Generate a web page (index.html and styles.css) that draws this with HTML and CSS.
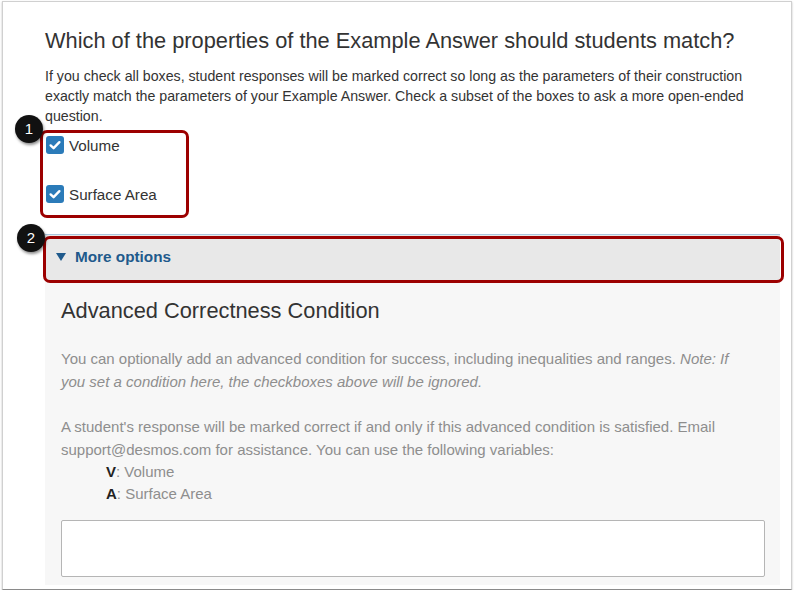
FILE: index.html
```html
<!DOCTYPE html>
<html>
<head>
<meta charset="utf-8">
<link rel="stylesheet" href="styles.css">
</head>
<body>
<div class="frame">
  <h1 class="q-title">Which of the properties of the Example Answer should students match?</h1>
  <p class="q-desc">If you check all boxes, student responses will be marked correct so long as the parameters of their construction exactly match the parameters of your Example Answer. Check a subset of the boxes to ask a more open-ended question.</p>
  <div class="checks">
    <label class="check-row"><span class="checkbox"><svg viewBox="0 0 18 18" width="18" height="18"><path d="M4.6 9.4 L7.6 12.2 L13.4 6.2" fill="none" stroke="#fff" stroke-width="2.4" stroke-linecap="round" stroke-linejoin="round"/></svg></span>Volume</label>
    <label class="check-row"><span class="checkbox"><svg viewBox="0 0 18 18" width="18" height="18"><path d="M4.6 9.4 L7.6 12.2 L13.4 6.2" fill="none" stroke="#fff" stroke-width="2.4" stroke-linecap="round" stroke-linejoin="round"/></svg></span>Surface Area</label>
  </div>
  <div class="more-bar"><span class="tri"></span>More options</div>
  <div class="panel">
    <h2 class="adv-title">Advanced Correctness Condition</h2>
    <p class="adv-p1">You can optionally add an advanced condition for success, including inequalities and ranges. <em>Note: If you set a condition here, the checkboxes above will be ignored.</em></p>
    <p class="adv-p2">A student's response will be marked correct if and only if this advanced condition is satisfied. Email support@desmos.com for assistance. You can use the following variables:</p>
    <div class="var-row"><b>V</b>: Volume</div>
    <div class="var-row"><b>A</b>: Surface Area</div>
    <div class="cond-input"></div>
  </div>

  <div class="hl hl-1"></div>
  <div class="hl hl-2"></div>
  <div class="badge badge-1">1</div>
  <div class="badge badge-2">2</div>
</div>
</body>
</html>
```
FILE: styles.css
```css
html, body {
  margin: 0;
  padding: 0;
  background: #ffffff;
}
body {
  font-family: "Liberation Sans", Arial, sans-serif;
  color: #333;
}
.frame {
  position: relative;
  margin: 1px 0 0 2px;
  width: 790px;
  height: 589px;
  box-sizing: border-box;
  border: 1px solid #d0d0d0;
  border-bottom: 1px solid #8a8a8a;
  box-shadow: 0 1px 2px rgba(0,0,0,0.25);
  background: #fff;
  padding: 27px 12px 0 42px;
  overflow: hidden;
}
.q-title {
  margin: 0;
  font-size: 21.8px;
  line-height: 24px;
  font-weight: normal;
  color: #333;
}
.q-desc {
  margin: 13px 0 0 0;
  font-size: 14.2px;
  line-height: 20px;
  color: #333;
  width: 702px;
}
.checks {
  display: flex;
  flex-direction: column;
  gap: 29px;
  margin-top: 9px;
}
.check-row {
  display: flex;
  align-items: center;
  height: 20px;
  font-size: 15.2px;
  color: #333;
}
.checkbox {
  display: inline-flex;
  width: 18px;
  height: 18px;
  margin: 0 5px 0 1px;
  background: #2b7bb9;
  border-radius: 3px;
}
.more-bar {
  margin-top: 30px;
  width: 735px;
  height: 46px;
  box-sizing: border-box;
  background: #e8e8e8;
  border-top: 1px solid #a9c6dd;
  display: flex;
  align-items: center;
  padding-left: 11px;
  padding-bottom: 1px;
  font-size: 15.3px;
  font-weight: bold;
  color: #1f5a8c;
}
.tri {
  width: 0;
  height: 0;
  border-left: 5px solid transparent;
  border-right: 5px solid transparent;
  border-top: 8px solid #1f5a8c;
  margin-right: 9px;
}
.panel {
  width: 735px;
  box-sizing: border-box;
  background: #f7f7f7;
  padding: 19px 15px 8px 16px;
}
.adv-title {
  margin: 0;
  font-size: 21.8px;
  line-height: 24px;
  font-weight: normal;
  color: #333;
}
.adv-p1, .adv-p2 {
  font-size: 15px;
  line-height: 23px;
  color: #8e8e8e;
  margin: 0;
  max-width: 686px;
}
.adv-p1 { margin-top: 24px; }
.adv-p2 { margin-top: 22px; }
.var-row {
  font-size: 15px;
  line-height: 22px;
  color: #8e8e8e;
  padding-left: 45px;
}
.var-row b {
  color: #222;
}
.cond-input {
  margin-top: 15px;
  height: 57px;
  box-sizing: border-box;
  background: #fff;
  border: 1px solid #b5b5b5;
  border-radius: 2px;
}
.hl {
  position: absolute;
  border: 3px solid #9c0000;
  border-radius: 7px;
  box-sizing: border-box;
}
.hl-1 {
  left: 37px;
  top: 128px;
  width: 149px;
  height: 88px;
}
.hl-2 {
  left: 40px;
  top: 234px;
  width: 741px;
  height: 47px;
}
.badge {
  position: absolute;
  width: 28px;
  height: 28px;
  border-radius: 50%;
  background: #111;
  color: #fff;
  font-size: 15px;
  line-height: 28px;
  text-align: center;
  box-shadow: 1px 2px 3px rgba(0,0,0,0.45);
}
.badge-1 { left: 12px; top: 113px; }
.badge-2 { left: 14px; top: 222px; }
```
